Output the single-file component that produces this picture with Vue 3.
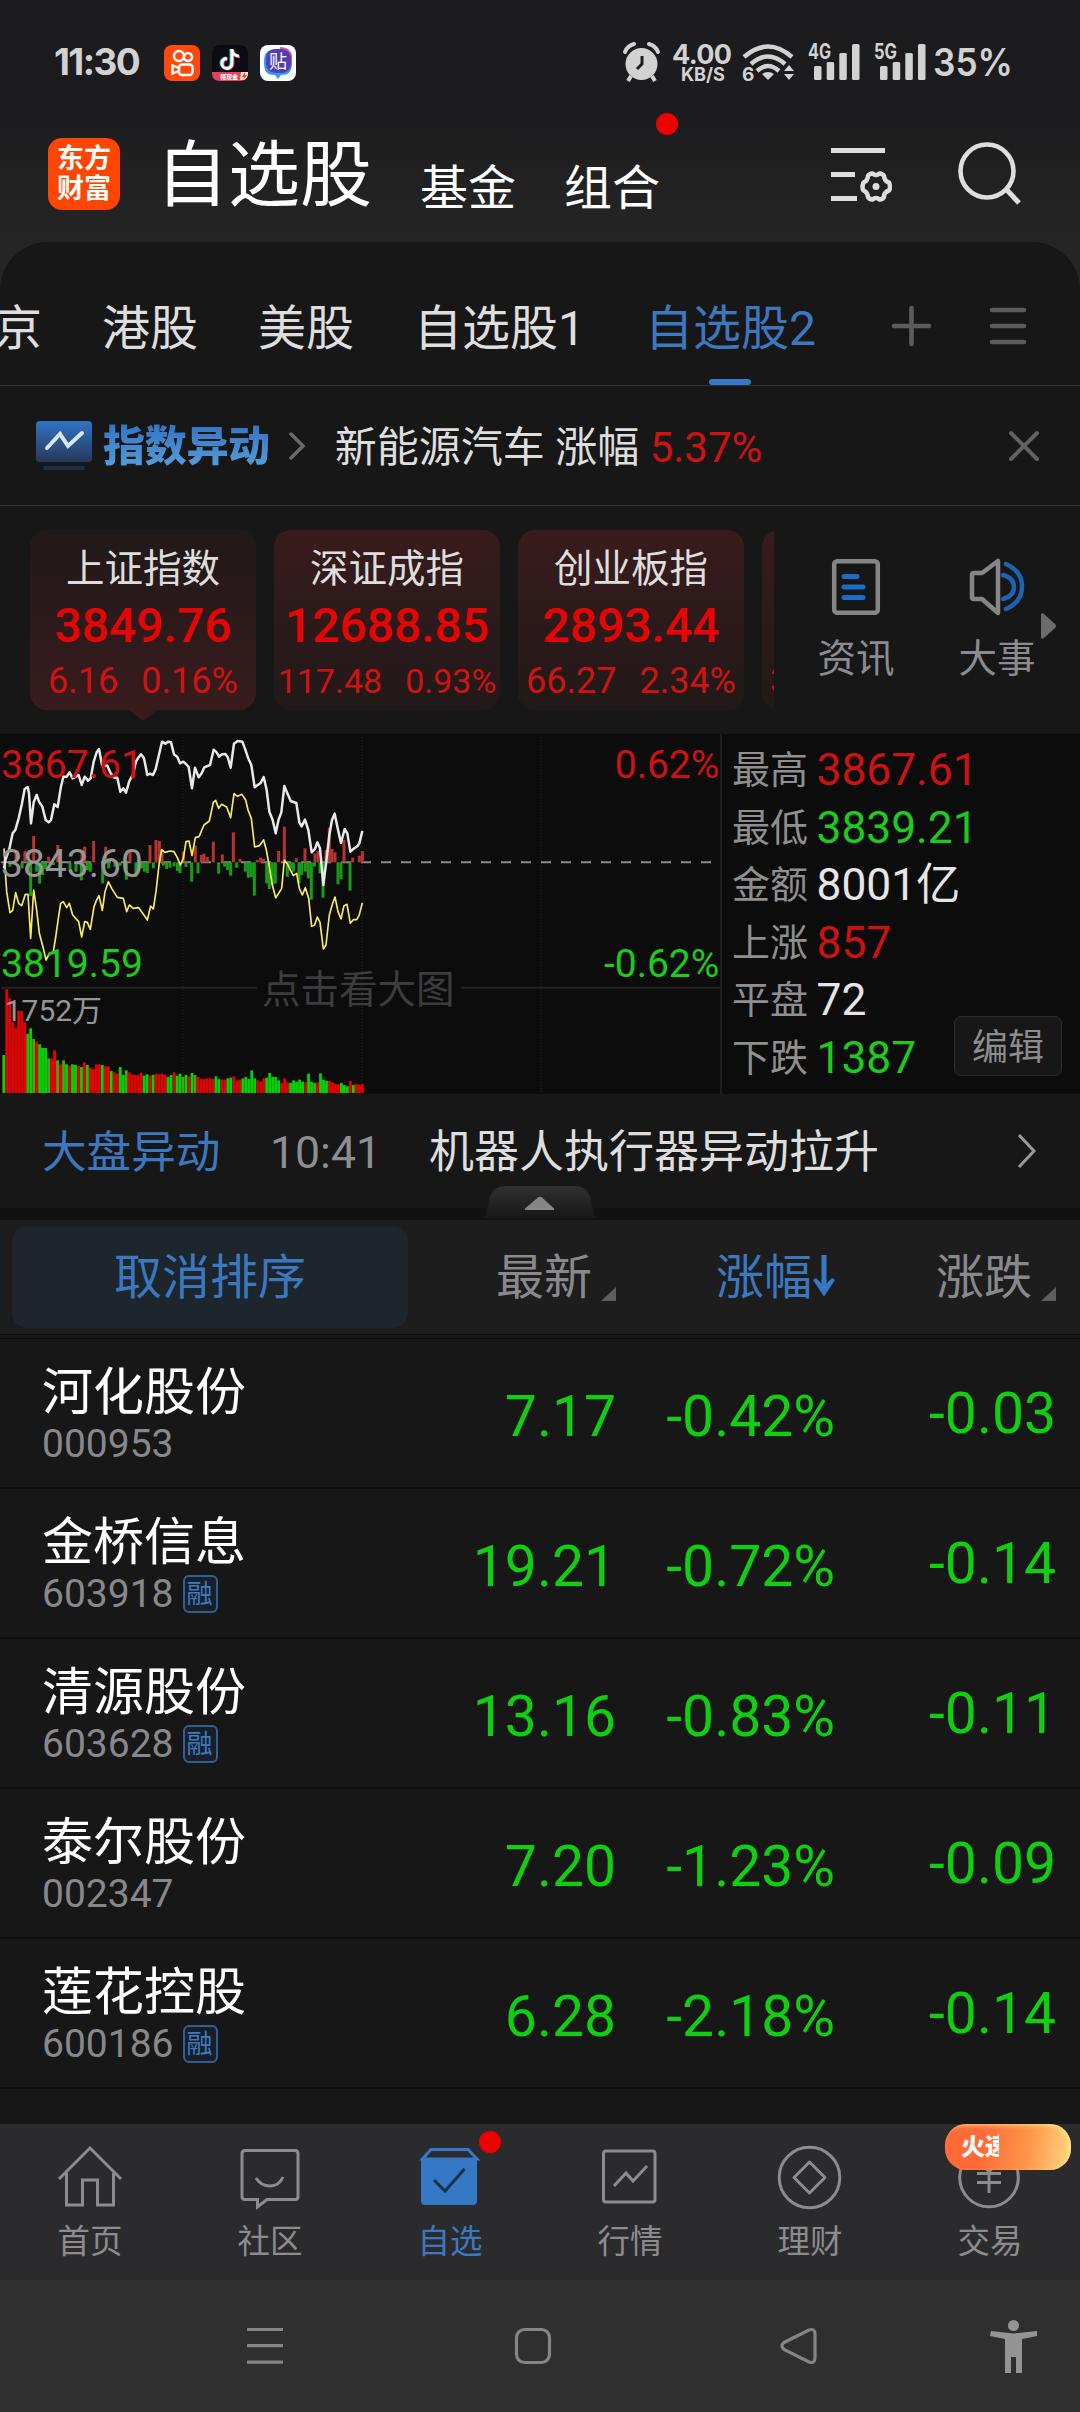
<script setup>
const tabs = ['京', '港股', '美股', '自选股1', '自选股2']

const indices = [
  { name: '上证指数', value: '3849.76', diff: '6.16', pct: '0.16%', active: true },
  { name: '深证成指', value: '12688.85', diff: '117.48', pct: '0.93%', tight: true },
  { name: '创业板指', value: '2893.44', diff: '66.27', pct: '2.34%' },
  { name: '', value: '', diff: '38.15', pct: '0.41%' },
]

const stats = [
  { label: '最高', value: '3867.61', tone: 'red' },
  { label: '最低', value: '3839.21', tone: 'green' },
  { label: '金额', value: '8001亿', tone: 'white' },
  { label: '上涨', value: '857', tone: 'red' },
  { label: '平盘', value: '72', tone: 'white' },
  { label: '下跌', value: '1387', tone: 'green' },
]

const stocks = [
  { name: '河化股份', code: '000953', price: '7.17', pct: '-0.42%', diff: '-0.03' },
  { name: '金桥信息', code: '603918', margin: true, price: '19.21', pct: '-0.72%', diff: '-0.14' },
  { name: '清源股份', code: '603628', margin: true, price: '13.16', pct: '-0.83%', diff: '-0.11' },
  { name: '泰尔股份', code: '002347', price: '7.20', pct: '-1.23%', diff: '-0.09' },
  { name: '莲花控股', code: '600186', margin: true, price: '6.28', pct: '-2.18%', diff: '-0.14' },
]

const priceLine =
  '12,430 16,405 28,372 38,325 46,315 56,280 65,240 74,192 83,186 87,205 93,295 101,232 110,210 117,230 127,245 137,285 146,292 153,285 163,238 173,246 182,190 190,155 200,155 209,142 218,160 236,150 245,180 254,155 264,167 272,160 281,110 290,82 297,72 306,120 322,122 332,145 343,158 352,158 361,200 370,190 378,203 388,168 398,150 408,110 415,98 423,88 432,100 442,150 450,146 459,150 467,132 478,85 486,50 496,56 504,50 513,52 522,88 532,96 540,115 550,110 558,117 566,126 576,190 585,128 596,157 605,145 613,127 630,120 641,74 650,82 657,95 666,88 676,87 683,96 692,128 702,56 713,48 727,50 736,74 744,98 754,120 764,187 773,180 782,174 791,156 800,195 808,260 818,285 827,325 836,283 844,262 853,183 862,205 872,228 889,234 898,292 905,304 915,284 925,315 935,382 945,372 952,352 960,370 970,480 980,400 988,330 996,285 1004,266 1013,310 1023,354 1034,312 1042,325 1051,380 1060,372 1072,364 1078,355 1087,318'
const averageLine =
  '12,370 16,440 20,500 30,563 38,556 47,503 56,535 65,542 76,508 84,508 92,640 97,560 101,495 110,555 118,625 130,670 138,705 146,690 160,680 168,630 175,580 182,535 190,530 200,548 208,535 218,570 236,590 245,636 254,590 262,592 271,613 282,545 290,525 297,512 307,556 315,500 325,470 335,490 352,517 370,520 380,560 388,540 400,550 416,548 428,565 442,585 452,543 460,552 468,500 477,420 485,374 495,382 510,378 522,380 532,398 541,420 550,400 558,350 567,348 576,392 586,338 597,335 612,300 628,288 640,232 647,226 656,250 665,238 680,246 692,278 702,206 712,214 726,208 737,225 744,255 754,280 764,366 778,362 791,345 799,375 808,425 817,480 827,518 836,505 845,490 853,405 862,416 871,435 880,452 890,445 898,490 907,510 916,488 926,520 935,604 944,600 952,576 960,592 970,672 978,660 988,570 998,535 1005,516 1014,560 1023,582 1032,542 1041,538 1051,595 1060,584 1070,584 1077,572 1087,534'

// [x, extent from the centre line]; positive bars rise, negative ones hang
const momentum = [
  [48, 30], [75, 34], [101, 79], [146, 17], [173, 52], [246, 30], [254, 47], [281, 64], [317, 47], [390, 37],
  [450, 52], [468, 67], [478, 64], [486, 37], [550, 32], [586, 50], [604, 22], [612, 26], [622, 16], [640, 62],
  [667, 24], [700, 90], [720, 10], [772, 7], [782, 14], [790, 10], [836, 34], [853, 107], [889, 12], [915, 42],
  [945, 27], [954, 34], [978, 37], [988, 104], [996, 40], [1005, 30], [1032, 67], [1058, 14], [1078, 20], [1087, 34],
  [30, -13], [66, -18], [84, -18], [92, -101], [110, -28], [119, -64], [128, -38], [137, -20], [160, -8], [182, -13],
  [210, -20], [228, -28], [244, -54], [262, -23], [271, -28], [308, -63], [326, -18], [345, -13], [360, -10], [379, -52],
  [408, -43], [425, -18], [433, -28], [442, -32], [460, -18], [490, -10], [500, -20], [510, -16], [522, -12], [532, -26],
  [540, -32], [558, -14], [575, -58], [594, -33], [656, -34], [674, -13], [683, -23], [692, -40], [710, -16], [736, -28],
  [745, -46], [754, -44], [763, -100], [800, -63], [808, -80], [817, -68], [826, -64], [862, -43], [872, -18], [880, -28],
  [897, -63], [905, -38], [916, -28], [925, -48], [934, -112], [943, -13], [960, -33], [969, -106], [1014, -66], [1023, -50], [1050, -85],
]

const volumeTops = [
  990, 793, 820, 890, 908, 858, 858, 892, 926, 910, 942, 950, 958, 969, 969, 1000, 1000, 976, 1006, 1018, 1006, 1018, 1022, 1018,
  1020, 1023, 1026, 1012, 1020, 1028, 1032, 1018, 1018, 1020, 1024, 1024, 1038, 1042, 1046, 1026, 1050, 1036, 1042, 1048, 1050, 1050,
  1044, 1052, 1048, 1052, 1050, 1046, 1048, 1046, 1050, 1056, 1050, 1042, 1052, 1046, 1056, 1050, 1054, 1044, 1050, 1056, 1062, 1062,
  1060, 1060, 1062, 1054, 1062, 1064, 1064, 1060, 1058, 1054, 1066, 1064, 1060, 1056, 1062, 1036, 1060, 1066, 1070, 1060, 1058, 1044,
  1056, 1056, 1066, 1074, 1060, 1072, 1074, 1066, 1070, 1064, 1070, 1072, 1046, 1070, 1074, 1072, 1045, 1064, 1068, 1068, 1072, 1076,
  1078, 1074, 1080, 1084, 1068, 1080, 1076, 1080, 1077,
]
const volumeTones =
  'grrrrrrrogorgggorrorogrggrgrgrrrrgrrgrrggorrrrrggrgrrrrggrggogrgorrrrrrggrrggrrrgggggrrrgggggrrrgggggrggorgggrrrrgggrgrrr'
const toneColor = { r: '#e00404', g: '#05d205', o: '#4ba50c' }
</script>

<template>
  <div class="screen">
    <header class="top">
      <div class="status">
        <span class="clock">11:30</span>
        <svg class="app first" viewBox="0 0 36 36">
          <rect width="36" height="36" rx="8" fill="#fe4a0c" />
          <g fill="none" stroke="#fff" stroke-width="2.400">
            <circle cx="15" cy="11" r="5" /><circle cx="24" cy="12" r="4" />
            <rect x="15" y="19.500" width="13.500" height="10.500" rx="3" /><path d="m15 23-6.500-2.500v8l6.500-2.500" />
          </g>
        </svg>
        <svg class="app" viewBox="0 0 36 36">
          <rect width="36" height="36" rx="8" fill="#0b0b16" />
          <g fill="none" stroke-width="2.800">
            <path d="M19 4v14a5 5 0 1 1-5-5M19 4c0 4 3 7 7 7" stroke="#25e8e4" />
            <path d="M21 5v14a5 5 0 1 1-5-5M21 5c0 4 3 7 7 7" stroke="#f32c55" />
            <path d="M20 4v14.500a5 5 0 1 1-5-5M20 4c0 4 3 7 7 7" stroke="#fff" />
          </g>
          <path d="M0 27h36v1q0 8-8 8H8q-8 0-8-8z" fill="#e34361" />
          <text x="8" y="34" font-size="6" font-weight="700" fill="#fff">领现金</text>
          <path d="M29 27h7v1q0 5-4 7h-4z" fill="#ffe1b0" /><path d="m33 27-3 5h2l-1 3 4-5h-2z" fill="#e34361" />
        </svg>
        <svg class="app" viewBox="0 0 36 36">
          <rect width="36" height="36" rx="8" fill="#fff" />
          <path d="M18 4c10 0 14 3 14 13S29 30 21 30l-3 4-3-4C7 30 4 27 4 17S8 4 18 4z" fill="#309cf5" />
          <path d="M20 2c9 0 13 5 12 14-1 8-5 12-12 12z" fill="#ee5192" />
          <rect x="6" y="4" width="25" height="24" rx="9" fill="#5140b5" />
          <text x="9" y="23" font-size="18" fill="#fff">贴</text>
        </svg>
        <svg class="radio" viewBox="620 36 400 50" fill="#d2d2d2">
          <circle cx="641.5" cy="64" r="16" />
          <path d="m631 76-3 5M652 76l3 5" stroke="#d2d2d2" stroke-width="4" />
          <path d="M625 52q2-6 9-8M658 52q-2-6-9-8" fill="none" stroke="#d2d2d2" stroke-width="4" stroke-linecap="round" />
          <path d="M642 56v8l-5 5" fill="none" stroke="#1d1d1f" stroke-width="3" />
          <text x="672" y="63.500" class="inter" font-size="27" font-weight="700" textLength="60">4.00</text>
          <text x="681" y="80.500" class="inter" font-size="18.500" font-weight="700" textLength="44" lengthAdjust="spacingAndGlyphs">KB/S</text>
          <g fill="none" stroke="#d2d2d2" stroke-width="4.500">
            <path d="M744 57q24-21 48 0" /><path d="M751 64q17-15 34 0" /><path d="M757 71q11-10 22 0" />
          </g>
          <path d="M762 74q6-4 12 0l-6 6z" />
          <text x="742" y="81" class="inter" font-size="19" font-weight="700">6</text>
          <path d="m784 71 5-6 5 6zM784 74h10l-5 6z" />
          <text x="808" y="59" class="inter" font-size="21" font-weight="700" textLength="23" lengthAdjust="spacingAndGlyphs">4G</text>
          <text x="874" y="59" class="inter" font-size="21" font-weight="700" textLength="23" lengthAdjust="spacingAndGlyphs">5G</text>
          <g v-for="x in [814, 880]" :key="x">
            <rect :x="x" y="66" width="7.5" height="14" rx="1.5" /><rect :x="x + 12.7" y="62" width="7.5" height="18" rx="1.5" />
            <rect :x="x + 25.3" y="53" width="7.5" height="27" rx="1.5" /><rect :x="x + 38" y="44" width="7.5" height="36" rx="1.5" />
          </g>
          <text x="933" y="76" class="inter" font-size="38" font-weight="600" textLength="80" lengthAdjust="spacingAndGlyphs">35%</text>
        </svg>
      </div>

      <div class="title-bar">
        <div class="logo"><span>东方</span><span>财富</span></div>
        <span class="title">自选股</span>
        <span class="sub">基金</span>
        <span class="sub">组合<i class="dot"></i></span>
        <svg class="manage" viewBox="0 0 64 64" fill="none" stroke="#dedede" stroke-width="5">
          <path d="M3 10.500h54M3 34.500h24M3 58.500h26" transform="translate(0 -2)" />
          <path stroke-width="4.500" stroke-linejoin="round" d="M44.500 31q3.500 3 7 0 3 0 4.500 2.500.5 5 5 6.500 2 5 0 8-5 1.500-5 6.500-1.500 2.500-4.500 2.500-3.500-3-7 0-3 0-4.500-2.500-.5-5-4.500-6.500-2-3 0-8 4-1.500 4.500-6.500 1.500-2.500 4.500-2.500z" transform="translate(0 .5)" />
          <circle cx="48" cy="44.500" r="3.500" fill="#dedede" stroke="none" />
        </svg>
        <svg class="search" viewBox="0 0 64 64" fill="none" stroke="#dedede" stroke-width="4.600">
          <circle cx="29" cy="29" r="26.500" /><path d="m48 47 13 14" stroke-width="5" />
        </svg>
      </div>
    </header>

    <nav class="tabs">
      <span v-for="(t, i) in tabs" :key="t" class="tab" :class="{ on: i === 4 }">{{ t }}</span>
      <svg class="tab-tools" viewBox="0 0 140 44" stroke="#5c5c5c" stroke-width="4.600" stroke-linecap="round">
        <path d="M4 22h35M21.500 4v36M102 6h32M102 22h32M102 38h32" />
      </svg>
    </nav>

    <div class="flash">
      <svg class="flash-icon" viewBox="0 0 56 50">
        <defs><linearGradient id="fi" x2="0" y2="1"><stop stop-color="#3273c4" /><stop offset="1" stop-color="#25385a" /></linearGradient></defs>
        <rect width="56" height="41" rx="4" fill="url(#fi)" /><rect x="7" y="45" width="42" height="4" rx="2" fill="#1f2f42" />
        <path d="m11 27 13-14 8 12 14-13" fill="none" stroke="#d9e6f6" stroke-width="4" stroke-linecap="round" />
      </svg>
      <b>指数异动</b>
      <svg class="flash-go" viewBox="0 0 18 28" fill="none" stroke="#6a6a6a" stroke-width="3.500" stroke-linecap="round"><path d="m3 2 12 12L3 26" /></svg>
      <span class="flash-text">新能源汽车 涨幅 <em>5.37%</em></span>
      <svg class="close" viewBox="0 0 32 32" stroke="#626262" stroke-width="4" stroke-linecap="round"><path d="m3 3 26 26M29 3 3 29" /></svg>
    </div>

    <section class="indices">
      <div class="cards">
        <div v-for="(c, i) in indices" :key="i" class="card" :class="{ active: c.active, tight: c.tight }">
          <span class="c-name">{{ c.name }}</span>
          <span class="c-value">{{ c.value }}</span>
          <span class="c-foot"><span>{{ c.diff }}</span><span>{{ c.pct }}</span></span>
        </div>
      </div>
      <div class="short">
        <svg viewBox="0 0 56 60" fill="none" stroke="#868686" stroke-width="4.500">
          <rect x="6.200" y="4.200" width="43.600" height="51.600" rx="3" />
          <path d="M16 19.500h13M16 30h19M16 40.500h19" stroke="#1c6cc8" stroke-width="5" stroke-linecap="round" />
        </svg>
        <span>资讯</span>
      </div>
      <div class="short next">
        <svg viewBox="0 0 56 60" fill="none" stroke="#868686" stroke-width="4.500">
          <path d="M5 16h8L29 4v52L13 42H5q-2 0-2-2V18q0-2 2-2z" stroke-linejoin="round" />
          <path d="M34 18q11 3 11 12t-11 12M37 7q16 7 16 22.500T37 52" stroke="#1c63b4" stroke-linecap="round" />
        </svg>
        <span>大事</span>
      </div>
      <svg class="more" viewBox="0 0 15 26"><path d="M0 2q0-3 3-1l11 10q2 2 0 4L3 25q-3 2-3-1z" fill="#6c6c6c" /></svg>
    </section>

    <section class="market">
      <svg class="chart" viewBox="0 27 2160 1077">
        <g stroke="#202020" stroke-width="5" stroke-dasharray="3 6">
          <path d="M548 36V1100M1086 36V1100M1623 36V1100" />
        </g>
        <path d="M3 788.500H771M1383 788.500H2160" stroke="#232323" stroke-width="6" />
        <path d="M3 412H2135" stroke="#8a8a8a" stroke-width="6" stroke-dasharray="30 30" />
        <rect
          v-for="m in momentum" :key="'m' + m[0]" :x="m[0] - 4.5" :y="m[1] > 0 ? 412 - m[1] : 412"
          width="9" :height="Math.abs(m[1])" :fill="m[1] > 0 ? '#b83232' : '#189c18'"
        />
        <polyline :points="averageLine" fill="none" stroke="#f8ea62" stroke-width="5" stroke-linejoin="round" />
        <polyline :points="priceLine" fill="none" stroke="#e9e9e9" stroke-width="7.500" stroke-linejoin="round" />
        <rect
          v-for="(t, i) in volumeTops" :key="'v' + i" :x="7 + i * 8.965" :y="t" width="8.500" :height="1104 - t"
          :fill="toneColor[volumeTones[i]] || '#e00404'"
        />
        <g font-size="117">
          <text x="3" y="159" fill="#cd1212">3867.61</text>
          <text x="3" y="456" fill="#969696">3843.60</text>
          <text x="3" y="756" fill="#1ccb1c">3819.59</text>
          <text x="2158" y="159" fill="#cd1212" text-anchor="end">0.62%</text>
          <text x="2158" y="756" fill="#1ccb1c" text-anchor="end">-0.62%</text>
          <text x="786" y="833" font-size="115.500" fill="#3c3c3c">点击看大图</text>
        </g>
        <text x="14" y="888" font-size="90" fill="#969696">1752万</text>
      </svg>
      <div class="stats">
        <div v-for="s in stats" :key="s.label" class="stat">
          <span>{{ s.label }}</span><b :class="s.tone">{{ s.value }}</b>
        </div>
        <button class="edit">编辑</button>
      </div>
    </section>

    <div class="news">
      <span class="n-tag">大盘异动</span><span class="n-time">10:41</span><span class="n-text">机器人执行器异动拉升</span>
      <svg class="n-go" viewBox="0 0 20 36" fill="none" stroke="#9a9a9a" stroke-width="3"><path d="m2 2 15 16L2 34" /></svg>
      <svg class="fold" viewBox="0 0 110 32">
        <defs><linearGradient id="fo" x2="0" y2="1"><stop stop-color="#303030" /><stop offset="1" stop-color="#171717" /></linearGradient></defs>
        <path d="M4 14Q7 0 20 0h70q13 0 16 14l4 18H0z" fill="url(#fo)" />
        <path d="M40 22.500 53 11.500q2-1.500 4 0l12 11v1.500H40z" fill="#868686" />
      </svg>
    </div>

    <div class="list-head">
      <span class="reset">取消排序</span>
      <span class="h1">最新<i class="corner"></i></span>
      <span class="h2">涨幅<svg viewBox="0 0 24 42"><path d="M12 0v34" stroke="#3478c6" stroke-width="5" /><path d="m1 25 3-2 8 8 8-8 3 2-11 16.500z" fill="#3478c6" /></svg></span>
      <span class="h3">涨跌<i class="corner"></i></span>
    </div>

    <div v-for="s in stocks" :key="s.code" class="row">
      <div class="who">
        <span class="s-name">{{ s.name }}</span>
        <span class="s-code">{{ s.code }}<i v-if="s.margin">融</i></span>
      </div>
      <span class="price">{{ s.price }}</span>
      <span class="pct">{{ s.pct }}</span>
      <span class="diff">{{ s.diff }}</span>
    </div>
    <div class="rest"></div>

    <nav class="bottom">
      <div class="item">
        <svg viewBox="0 0 72 72"><path d="m5 35 31-31 31 31M12.500 29v32h16V36h15v25h16V29" /></svg><span>首页</span>
      </div>
      <div class="item">
        <svg viewBox="0 0 72 72"><path d="M11 6.500h50q3 0 3 3v43q0 3-3 3H33l-9.500 7.500v-7.500H11q-3 0-3-3v-43q0-3 3-3zM22 34q5 8 14 8t13-9" /></svg><span>社区</span>
      </div>
      <div class="item on">
        <svg viewBox="0 0 72 72">
          <path d="M8.500 15 17 5.500h37l9 9.500z" stroke="#3478c6" />
          <path d="M7 14h56v43q0 4-4 4H11q-4 0-4-4z" fill="#3478c6" stroke="none" />
          <path d="m20 36 11 11 19.500-22" stroke="#1d3049" />
        </svg><span>自选</span><i class="dot"></i>
      </div>
      <div class="item">
        <svg viewBox="0 0 72 72"><rect x="9.500" y="7" width="51.500" height="51" rx="2.500" /><path d="m20 42 12-13 7 8 14-15" /></svg><span>行情</span>
      </div>
      <div class="item">
        <svg viewBox="0 0 72 72"><circle cx="35.500" cy="33.500" r="30.300" /><path d="m35.500 18 15.500 15.500L35.500 49 20 33.500z" stroke-linejoin="round" /></svg><span>理财</span>
      </div>
      <div class="item">
        <svg viewBox="0 0 72 72"><circle cx="35" cy="33.500" r="29.300" /><path d="m27 18 8 10 8-10M23 29.500h24M23 38.500h24M35 28v21" /></svg><span>交易</span>
        <div class="promo"><span>火速</span></div>
      </div>
    </nav>

    <div class="system">
      <svg viewBox="0 0 1080 132" fill="none" stroke="#858585" stroke-width="3.200">
        <path d="M247 49.500h36M247 65.700h36M247 82.200h36" />
        <rect x="516.500" y="49.500" width="33" height="33" rx="8" />
        <path d="M784 62.500 809 50q6-2 6 4v24q0 6-6 4L784 69.500q-4-3.500 0-7z" />
        <g fill="#949494" stroke="none">
          <circle cx="1013.500" cy="45.500" r="5.500" />
          <path d="m991 51 22.500 2.500L1037 51v5l-15 3v34h-6V77h-5v16h-6V59l-15-3z" />
        </g>
      </svg>
    </div>
  </div>
</template>

<style>
body { background: #171717; }
</style>

<style scoped>
.screen {
  width: 1080px; height: 2412px; overflow: hidden; display: flex; flex-direction: column;
  background: #171717; color: #dedede;
  font-family: Roboto, "Noto Sans CJK SC", sans-serif; white-space: nowrap;
}
.screen * { box-sizing: border-box; flex-shrink: 0; }
svg { display: block; }
i, em { font-style: normal; }
.inter, .clock { font-family: Inter, sans-serif; }

.top { height: 290px; background: linear-gradient(#1c1c1e 0, #1c1c1e 105px, #252525 240px); }
.status { height: 126px; display: flex; align-items: center; padding: 0 0 0 54px; }
.clock { width: 98px; font-size: 37px; font-weight: 650; color: #d2d2d2; letter-spacing: -1.600px; margin-bottom: 3px; }
.app { width: 36px; height: 36px; margin-left: 12px; }
.radio { width: 400px; height: 50px; margin-left: 324px; margin-bottom: 4px; }
.title-bar { display: flex; align-items: center; height: 116px; padding: 0 0 20px 48px; }
.logo {
  width: 72px; height: 72px; border-radius: 14px; background: #ff4600; color: #fff; display: flex;
  flex-direction: column; align-items: center; justify-content: center; font-size: 27px; line-height: 30px; font-weight: 700;
}
.title { font-size: 72px; line-height: 80px; margin: 4px 0 0 36px; color: #fff; }
.sub { position: relative; font-size: 48px; line-height: 60px; margin: 29px 0 0 48px; color: #fff; }
.dot { position: absolute; width: 22px; height: 22px; border-radius: 50%; background: #ee0000; }
.sub .dot { left: 92px; top: -46px; }
.manage { width: 64px; height: 64px; margin-left: 168px; }
.search { width: 64px; height: 64px; margin-left: 66px; }

.tabs {
  height: 144px; margin-top: -48px; border-radius: 48px 48px 0 0; background: #171717;
  border-bottom: 1px solid #303030; display: flex; align-items: center; gap: 60px; padding: 30px 0 0; margin-left: 0;
}
.tab { font-size: 48px; line-height: 60px; position: relative; }
.tab:first-child { margin-left: -6px; }
.tab.on { color: #3b78bf; }
.tab.on::after { content: ""; position: absolute; width: 42px; height: 6px; border-radius: 3px; background: #3478c6; left: 64px; bottom: -26px; }
.tab-tools { width: 140px; height: 44px; margin-left: 14px; margin-bottom: 6px; }

.flash { height: 120px; border-bottom: 1px solid #303030; display: flex; align-items: center; padding-left: 36px; font-size: 42px; }
.flash-icon { width: 56px; height: 50px; }
.flash b { font-weight: 900; line-height: 56px; margin: 3px 0 0 11px; letter-spacing: -0.300px; background: linear-gradient(#2f6fc0, #5aa4dc); background-clip: text; -webkit-background-clip: text; color: transparent; }
.flash-go { width: 18px; height: 28px; margin: 0 29px 0 18px; }
.flash-text { margin-bottom: 5px; }
.flash em { color: #cd1212; }
.close { width: 32px; height: 32px; margin-left: auto; margin-right: 40px; margin-top: 1px; }

.indices { height: 228px; display: flex; padding-top: 24px; }
.cards { width: 774px; height: 204px; padding-left: 30px; display: flex; gap: 18px; overflow: hidden; }
.card {
  position: relative; width: 226px; height: 180px; border-radius: 17px; background: linear-gradient(#391b1d, #211919);
  display: flex; flex-direction: column; align-items: center; padding-top: 12px;
}
.card.active { background: linear-gradient(#211919, #391b1d); }
.card.active::after { content: ""; position: absolute; top: 179px; left: 98px; border: 15px solid transparent; border-top: 12px solid #391b1d; border-bottom: 0; }
.c-name { font-size: 38.500px; line-height: 54px; height: 54px; }
.c-value { font-size: 48px; font-weight: 500; line-height: 60px; height: 60px; color: #e60505; }
.c-foot { display: flex; justify-content: center; gap: 23px; font-size: 36px; line-height: 50px; color: #cf1313; }
.card.tight .c-foot { font-size: 34px; gap: 23px; }
.short { width: 78px; margin: 27px 0 0 43px; display: flex; flex-direction: column; align-items: center; color: #8c8c90; font-size: 38.500px; }
.short svg { width: 56px; height: 60px; margin-bottom: 17px; }
.short span { line-height: 50px; }
.short.next { margin-left: 63px; }
.more { width: 15px; height: 26px; margin: 83px 0 0 5px; }

.market { height: 360px; display: flex; background: #0c0c0c; }
.chart { width: 720px; height: 359px; }
.stats { position: relative; width: 360px; border-left: 2px solid #1e1e1e; padding: 8px 0 0 10px; }
.stat { height: 57.600px; line-height: 57.600px; display: flex; align-items: center; font-size: 38px; color: #8f8f8f; }
.stat b { margin-left: 8.500px; font-size: 44.300px; font-weight: 400; }
.red { color: #cd1212; }
.green { color: #1ccb1c; }
.white { color: #e6e6e6; }
.edit {
  position: absolute; left: 232px; top: 282px; width: 108px; height: 60px; border-radius: 7px; padding: 5px 0 0;
  border: 1px solid #2d2d2d; background: #171717; color: #8c8c8f; font: inherit; font-size: 36px; line-height: 53px;
}

.news { position: relative; height: 126px; border-bottom: 12px solid #111; padding-left: 42px; display: flex; align-items: center; font-size: 45px; line-height: 60px; }
.n-tag { width: 180px; font-size: 44.600px; margin-top: 4px; color: #3b78bf; }
.n-time { width: 112px; margin: 3px 47px 0 48px; font-size: 44.600px; color: #8e8e92; }
.n-text { margin-top: 4px; }
.n-go { width: 20px; height: 36px; margin-left: 138px; }
.fold { position: absolute; left: 485px; top: 92px; width: 110px; height: 32px; }

.list-head { height: 119px; background: #1d1d1d; border-bottom: 1px solid #0c0c0c; box-shadow: inset 0 -3px #191919, inset 0 -4px #0c0c0c; display: flex; font-size: 48px; line-height: 113px; padding: 6px 0 0 12px; color: #89898c; }
.reset { width: 396px; height: 102px; border-radius: 15px; background: #1d252d; color: #3b78bf; text-align: center; line-height: 104px; }
.list-head > span:not(.reset) { height: 102px; line-height: 104px; display: flex; }
.h1 { width: 120px; margin-left: 88px; }
.h2 { width: 120px; margin-left: 100px; color: #3b78bf; }
.h2 svg { width: 24px; height: 42px; margin-top: 29px; }
.h3 { margin-left: 100px; }
.corner { width: 15px; height: 14px; margin: 61px 0 0 9px; background: #5e5e60; clip-path: polygon(100% 0, 100% 100%, 0 100%); }

.row { height: 150px; border-bottom: 2px solid #0f0f0f; display: flex; padding-left: 42px; color: #0fd00f; font-size: 57px; }
.who { width: 300px; display: flex; flex-direction: column; padding-top: 22px; }
.s-name { color: #fff; font-size: 51px; line-height: 63px; }
.s-code { display: flex; align-items: center; color: #88888b; font-size: 39px; line-height: 40px; }
.s-code i { width: 35px; height: 38px; margin-left: 9px; border: 2px solid #325f92; border-radius: 6px; background: #172029; color: #3f7ac0; font-size: 26px; line-height: 34px; text-align: center; text-indent: -1px; }
.price, .pct, .diff { text-align: right; line-height: 70px; padding-top: 43px; }
.price { width: 274px; }
.pct { width: 219px; }
.diff { width: 221px; padding-top: 40px; }
.rest { height: 35px; }

.bottom { height: 156px; background: #2b2b2d; display: flex; }
.item { position: relative; width: 180px; padding-top: 20px; display: flex; flex-direction: column; align-items: center; color: #8c8c8f; font-size: 32.500px; }
.item svg { width: 72px; height: 72px; fill: none; stroke: #8c8c8f; stroke-width: 3; }
.item > span { line-height: 40px; margin-top: 6px; }
.item.on { color: #3b78bf; }
.item .dot { left: 119px; top: 7px; }
.promo {
  position: absolute; left: 45px; top: 0; width: 126px; height: 46px; border-radius: 21px; overflow: hidden;
  background: linear-gradient(100deg, #ff6a38 30%, #fe9648 65%, #ffd884); box-shadow: inset -3px 2px 4px #ffe98aa0;
  padding-left: 16px; color: #fff; font-size: 24px; font-weight: 900; line-height: 47px;
}
.promo span { display: block; width: 38px; overflow: hidden; }
.system { height: 132px; background: #2f2f2f; }
</style>
